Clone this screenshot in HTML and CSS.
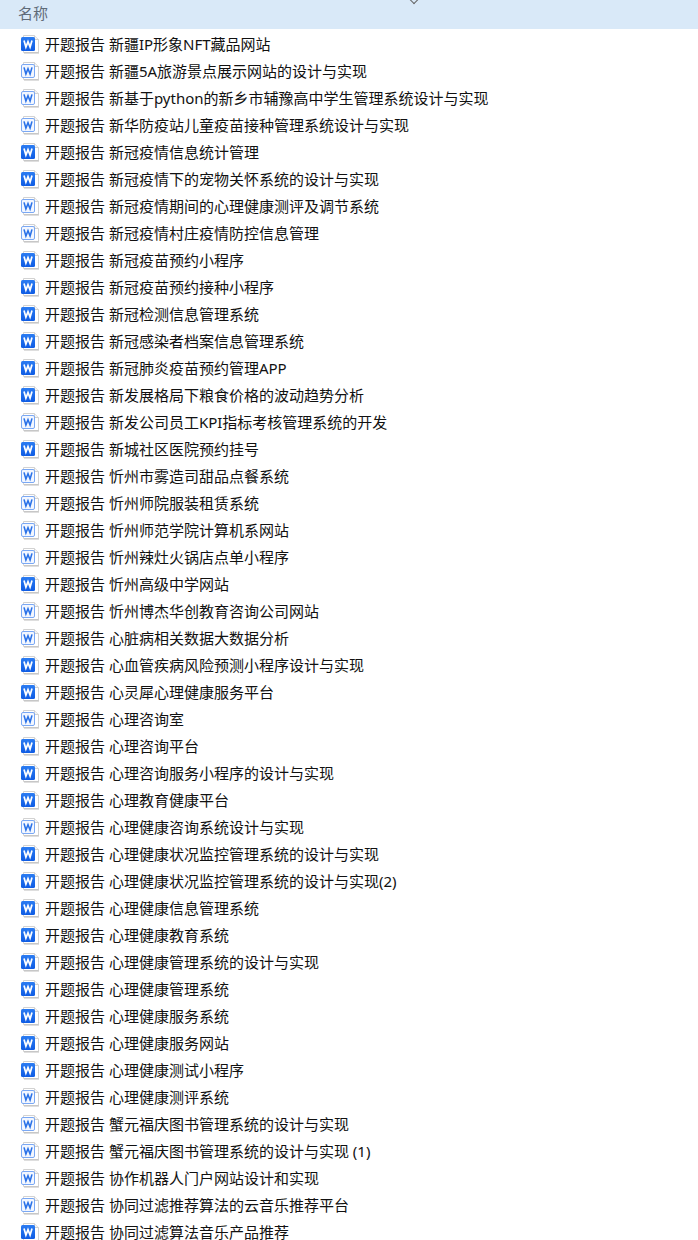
FILE: index.html
```html
<!DOCTYPE html>
<html lang="zh-CN">
<head>
    <meta charset="UTF-8">
    <meta name="viewport" content="width=device-width, initial-scale=1.0">
    <title>文件列表</title>
    <link rel="stylesheet" href="styles.css">
</head>
<body>
    <svg class="defs" width="0" height="0" aria-hidden="true">
        <linearGradient id="word-blue" x1="0" y1="0" x2="0" y2="1">
            <stop offset="0" stop-color="#2b7cf2"/>
            <stop offset="1" stop-color="#0f5ce4"/>
        </linearGradient>
        <symbol id="doc-dark" viewBox="0 0 20 20">
            <path d="M3.5 1.5H14.5L18.5 5.5V18.5H3.5Z" fill="#fff" stroke="#d2d2d2"/>
            <path d="M4 19H19" stroke="#bdbdbd"/>
            <path d="M14.5 1.5V5.5H18.5" fill="#f4f4f4" stroke="#d2d2d2"/>
            <rect x="1" y="3" width="14" height="14" rx="1.5" fill="url(#word-blue)"/>
            <path d="M4 6.4L5.9 13L8 7.6L10.1 13L12 6.4" fill="none" stroke="#fff" stroke-width="1.7"/>
        </symbol>
        <symbol id="doc-light" viewBox="0 0 20 20">
            <path d="M3.5 1.5H14.5L18.5 5.5V18.5H3.5Z" fill="#fff" stroke="#d2d2d2"/>
            <path d="M4 19H19" stroke="#bdbdbd"/>
            <path d="M14.5 1.5V5.5H18.5" fill="#f4f4f4" stroke="#d2d2d2"/>
            <rect x="1.5" y="3.5" width="13" height="13" rx="1.5" fill="#f3f7ff" stroke="#7aa8f4"/>
            <path d="M4 6.4L5.9 13L8 7.6L10.1 13L12 6.4" fill="none" stroke="#2a72e8" stroke-width="1.6"/>
        </symbol>
    </svg>

    <div class="header">
        <span class="sort-arrow"></span>
        <span class="header-name">名称</span>
    </div>

    <ul class="files">
        <li><svg class="doc"><use href="#doc-dark"/></svg>开题报告 新疆IP形象NFT藏品网站</li>
        <li><svg class="doc"><use href="#doc-light"/></svg>开题报告 新疆5A旅游景点展示网站的设计与实现</li>
        <li><svg class="doc"><use href="#doc-light"/></svg>开题报告 新基于python的新乡市辅豫高中学生管理系统设计与实现</li>
        <li><svg class="doc"><use href="#doc-light"/></svg>开题报告 新华防疫站儿童疫苗接种管理系统设计与实现</li>
        <li><svg class="doc"><use href="#doc-dark"/></svg>开题报告 新冠疫情信息统计管理</li>
        <li><svg class="doc"><use href="#doc-dark"/></svg>开题报告 新冠疫情下的宠物关怀系统的设计与实现</li>
        <li><svg class="doc"><use href="#doc-light"/></svg>开题报告 新冠疫情期间的心理健康测评及调节系统</li>
        <li><svg class="doc"><use href="#doc-light"/></svg>开题报告 新冠疫情村庄疫情防控信息管理</li>
        <li><svg class="doc"><use href="#doc-dark"/></svg>开题报告 新冠疫苗预约小程序</li>
        <li><svg class="doc"><use href="#doc-dark"/></svg>开题报告 新冠疫苗预约接种小程序</li>
        <li><svg class="doc"><use href="#doc-dark"/></svg>开题报告 新冠检测信息管理系统</li>
        <li><svg class="doc"><use href="#doc-dark"/></svg>开题报告 新冠感染者档案信息管理系统</li>
        <li><svg class="doc"><use href="#doc-dark"/></svg>开题报告 新冠肺炎疫苗预约管理APP</li>
        <li><svg class="doc"><use href="#doc-dark"/></svg>开题报告 新发展格局下粮食价格的波动趋势分析</li>
        <li><svg class="doc"><use href="#doc-light"/></svg>开题报告 新发公司员工KPI指标考核管理系统的开发</li>
        <li><svg class="doc"><use href="#doc-dark"/></svg>开题报告 新城社区医院预约挂号</li>
        <li><svg class="doc"><use href="#doc-light"/></svg>开题报告 忻州市雾造司甜品点餐系统</li>
        <li><svg class="doc"><use href="#doc-light"/></svg>开题报告 忻州师院服装租赁系统</li>
        <li><svg class="doc"><use href="#doc-light"/></svg>开题报告 忻州师范学院计算机系网站</li>
        <li><svg class="doc"><use href="#doc-light"/></svg>开题报告 忻州辣灶火锅店点单小程序</li>
        <li><svg class="doc"><use href="#doc-dark"/></svg>开题报告 忻州高级中学网站</li>
        <li><svg class="doc"><use href="#doc-light"/></svg>开题报告 忻州博杰华创教育咨询公司网站</li>
        <li><svg class="doc"><use href="#doc-light"/></svg>开题报告 心脏病相关数据大数据分析</li>
        <li><svg class="doc"><use href="#doc-dark"/></svg>开题报告 心血管疾病风险预测小程序设计与实现</li>
        <li><svg class="doc"><use href="#doc-dark"/></svg>开题报告 心灵犀心理健康服务平台</li>
        <li><svg class="doc"><use href="#doc-light"/></svg>开题报告 心理咨询室</li>
        <li><svg class="doc"><use href="#doc-dark"/></svg>开题报告 心理咨询平台</li>
        <li><svg class="doc"><use href="#doc-dark"/></svg>开题报告 心理咨询服务小程序的设计与实现</li>
        <li><svg class="doc"><use href="#doc-dark"/></svg>开题报告 心理教育健康平台</li>
        <li><svg class="doc"><use href="#doc-light"/></svg>开题报告 心理健康咨询系统设计与实现</li>
        <li><svg class="doc"><use href="#doc-dark"/></svg>开题报告 心理健康状况监控管理系统的设计与实现</li>
        <li><svg class="doc"><use href="#doc-dark"/></svg>开题报告 心理健康状况监控管理系统的设计与实现(2)</li>
        <li><svg class="doc"><use href="#doc-dark"/></svg>开题报告 心理健康信息管理系统</li>
        <li><svg class="doc"><use href="#doc-dark"/></svg>开题报告 心理健康教育系统</li>
        <li><svg class="doc"><use href="#doc-dark"/></svg>开题报告 心理健康管理系统的设计与实现</li>
        <li><svg class="doc"><use href="#doc-dark"/></svg>开题报告 心理健康管理系统</li>
        <li><svg class="doc"><use href="#doc-dark"/></svg>开题报告 心理健康服务系统</li>
        <li><svg class="doc"><use href="#doc-dark"/></svg>开题报告 心理健康服务网站</li>
        <li><svg class="doc"><use href="#doc-dark"/></svg>开题报告 心理健康测试小程序</li>
        <li><svg class="doc"><use href="#doc-light"/></svg>开题报告 心理健康测评系统</li>
        <li><svg class="doc"><use href="#doc-light"/></svg>开题报告 蟹元福庆图书管理系统的设计与实现</li>
        <li><svg class="doc"><use href="#doc-light"/></svg>开题报告 蟹元福庆图书管理系统的设计与实现 (1)</li>
        <li><svg class="doc"><use href="#doc-light"/></svg>开题报告 协作机器人门户网站设计和实现</li>
        <li><svg class="doc"><use href="#doc-light"/></svg>开题报告 协同过滤推荐算法的云音乐推荐平台</li>
        <li><svg class="doc"><use href="#doc-dark"/></svg>开题报告 协同过滤算法音乐产品推荐</li>
    </ul>
</body>
</html>
```

FILE: styles.css
```css
body {
    margin: 0;
    height: 1240px;
    overflow: hidden;
    background-color: #fff;
    font-family: "Noto Sans", "Noto Sans CJK SC", sans-serif;
    font-size: 15px;
    color: #111;
}

.defs {
    display: block;
}

.header {
    position: relative;
    height: 29px;
    padding-left: 18px;
    background-color: #d9e9f8;
    color: #5f6b78;
    line-height: 27px;
}

.sort-arrow {
    position: absolute;
    left: 411px;
    top: -3px;
    width: 5px;
    height: 5px;
    border-right: 1px solid #666;
    border-bottom: 1px solid #666;
    transform: rotate(45deg);
}

.files {
    list-style: none;
    margin: 0;
    padding: 1px 0 0 20px;
}

.files li {
    display: flex;
    align-items: center;
    height: 27px;
    line-height: 20px;
    white-space: nowrap;
}

.doc {
    flex: none;
    width: 20px;
    height: 20px;
    margin-right: 5px;
}
```
